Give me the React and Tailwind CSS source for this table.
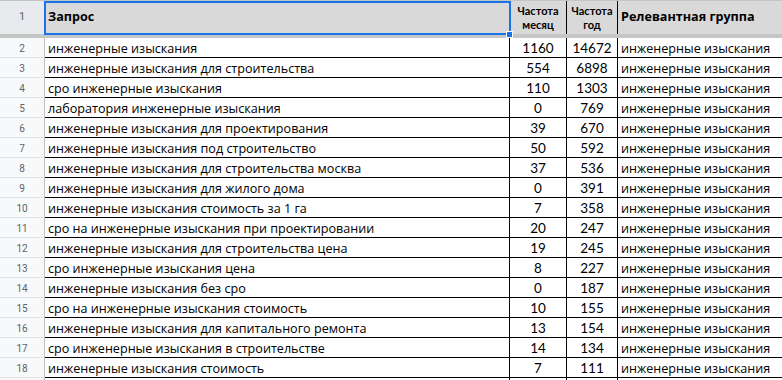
import React from 'react';

const rows = [
  ['инженерные изыскания', 1160, 14672],
  ['инженерные изыскания для строительства', 554, 6898],
  ['сро инженерные изыскания', 110, 1303],
  ['лаборатория инженерные изыскания', 0, 769],
  ['инженерные изыскания для проектирования', 39, 670],
  ['инженерные изыскания под строительство', 50, 592],
  ['инженерные изыскания для строительства москва', 37, 536],
  ['инженерные изыскания для жилого дома', 0, 391],
  ['инженерные изыскания стоимость за 1 га', 7, 358],
  ['сро на инженерные изыскания при проектировании', 20, 247],
  ['инженерные изыскания для строительства цена', 19, 245],
  ['сро инженерные изыскания цена', 8, 227],
  ['инженерные изыскания без сро', 0, 187],
  ['сро на инженерные изыскания стоимость', 10, 155],
  ['инженерные изыскания для капитального ремонта', 13, 154],
  ['сро инженерные изыскания в строительстве', 14, 134],
  ['инженерные изыскания стоимость', 7, 111],
];

const App = () => {
  return (
    <div className="w-[782px] h-[380px] overflow-hidden bg-white text-black font-['Open_Sans',sans-serif]">
      {/* header row */}
      <div className="flex h-[34px] border-t border-[#c4c4c4]">
        <div className="w-[45px] shrink-0 flex items-center justify-center bg-[#e8eaed] border-r border-[#c0c0c0] text-[11px] text-[#5f6368] font-['Roboto',sans-serif]">
          1
        </div>
        <div className="w-[465px] shrink-0 relative flex items-center pl-[3px] bg-[#d9d9d9] text-[12.6px] font-bold">
          Запрос
          <div className="absolute left-[-1px] top-0 right-[-1px] bottom-[-1px] border-2 border-[#1a73e8]"></div>
          <div className="absolute right-[-3px] bottom-[-4px] w-[7px] h-[7px] bg-[#1a73e8] border border-white z-10"></div>
        </div>
        <div className="w-[57px] shrink-0 flex flex-col items-center justify-center bg-[#d9d9d9] border-r border-black text-[11px] font-bold leading-[14px] font-['Lato',sans-serif]">
          <span>Частота</span>
          <span>месяц</span>
        </div>
        <div className="w-[51px] shrink-0 flex flex-col items-center justify-center bg-[#d9d9d9] border-r border-black text-[11px] font-bold leading-[14px] font-['Lato',sans-serif]">
          <span>Частота</span>
          <span>год</span>
        </div>
        <div className="flex-1 flex items-center pl-[3px] bg-[#d9d9d9] text-[12.6px] font-bold whitespace-nowrap overflow-hidden">
          Релевантная группа
        </div>
      </div>
      <div className="h-[4px] bg-[#c4c7c5]"></div>
      {rows.map((r, i) => (
        <div key={i} className="flex h-[20px]">
          <div className="w-[45px] shrink-0 flex items-center justify-center pt-[1px] bg-[#f8f9fa] border-r border-[#c0c0c0] border-b border-b-[#e2e3e3] text-[10px] text-[#5f6368] font-['Roboto',sans-serif]">
            {i + 2}
          </div>
          <div className="w-[465px] shrink-0 flex items-end pl-[3px] border-r border-b border-black text-[12.6px] leading-[17px] whitespace-nowrap overflow-hidden">
            {r[0]}
          </div>
          <div className="w-[57px] shrink-0 flex items-end justify-center border-r border-b border-black text-[13.5px] leading-[17px] font-['Lato',sans-serif]">
            {r[1]}
          </div>
          <div className="w-[51px] shrink-0 flex items-end justify-center border-r border-b border-black text-[13.5px] leading-[17px] font-['Lato',sans-serif]">
            {r[2]}
          </div>
          <div className="flex-1 flex items-end pl-[3px] border-b border-black text-[12.6px] leading-[17px] whitespace-nowrap overflow-hidden">
            инженерные изыскания
          </div>
        </div>
      ))}
      <div className="flex h-[20px]">
        <div className="w-[45px] shrink-0 bg-[#f8f9fa] border-r border-[#c0c0c0]"></div>
        <div className="w-[465px] shrink-0 border-r border-black"></div>
        <div className="w-[57px] shrink-0 border-r border-black"></div>
        <div className="w-[51px] shrink-0 border-r border-black"></div>
        <div className="flex-1"></div>
      </div>
    </div>
  );
};

export default App;
